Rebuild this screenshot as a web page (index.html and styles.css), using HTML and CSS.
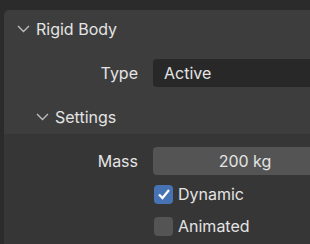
FILE: index.html
```html
<!DOCTYPE html>
<html lang="en">
    <head>
        <meta charset="UTF-8">
        <title>Rigid Body</title>
        <link rel="stylesheet" href="styles.css">
    </head>
    <body>
        <div class="panel">
            <div class="head">
                <svg class="chev" width="13" height="8" viewBox="0 0 13 8"><path d="M1 1 L6.5 6.5 L12 1" fill="none" stroke="#bdbdbd" stroke-width="1.4"/></svg>
                <span>Rigid Body</span>
            </div>
            <div class="row typerow">
                <label>Type</label>
                <div class="menu">Active</div>
            </div>
            <div class="sub">
                <div class="subhead">
                    <svg class="chev" width="13" height="8" viewBox="0 0 13 8"><path d="M1 1 L6.5 6.5 L12 1" fill="none" stroke="#bdbdbd" stroke-width="1.4"/></svg>
                    <span>Settings</span>
                </div>
                <div class="subbody">
                    <div class="row">
                        <label>Mass</label>
                        <div class="num">200 kg</div>
                    </div>
                    <div class="row check first">
                        <label></label>
                        <div class="cb on"><svg width="14" height="12" viewBox="0 0 14 12"><path d="M2 6.5 L5.5 10 L12 2" fill="none" stroke="#fff" stroke-width="2.2"/></svg></div>
                        <span>Dynamic</span>
                    </div>
                    <div class="row check">
                        <label></label>
                        <div class="cb"></div>
                        <span>Animated</span>
                    </div>
                </div>
            </div>
        </div>
    </body>
</html>
```
FILE: styles.css
```css
*{
    padding: 0;
    margin: 0;
    box-sizing: border-box;
}
body{
    background: #2b2b2b;
    font-family: Inter, "DejaVu Sans", sans-serif;
    font-size: 16px;
    color: #e4e4e4;
    width: 310px;
    height: 244px;
    overflow: hidden;
}
.panel{
    margin: 10px 0 0 4px;
    width: 306px;
    background: #3d3d3d;
    border-radius: 5px 0 0 0;
}
.head{
    height: 38px;
    display: flex;
    align-items: center;
    padding-left: 13px;
}
.head .chev{
    margin-right: 6px;
}
.row{
    display: grid;
    grid-template-columns: 134px 157px;
    column-gap: 15px;
    align-items: center;
}
.row label{
    text-align: right;
}
.typerow{
    margin-top: 11px;
}
.menu{
    height: 28px;
    line-height: 28px;
    background: #282828;
    border-radius: 4px 0 0 4px;
    padding-left: 11px;
}
.sub{
    margin-top: 13px;
}
.subhead{
    height: 34px;
    display: flex;
    align-items: center;
    padding-left: 32px;
}
.subhead .chev{
    margin-right: 6px;
}
.subbody{
    background: #363636;
    padding: 13px 0 2px;
}
.num{
    height: 28px;
    line-height: 28px;
    background: #545454;
    border-radius: 4px 0 0 4px;
    text-align: center;
    padding-left: 27px;
}
.check{
    grid-template-columns: 134px 19px auto;
    height: 32px;
}
.check.first{
    margin-top: 3px;
}
.check span{
    margin-left: -9px;
}
.cb{
    width: 19px;
    height: 19px;
    border-radius: 4px;
    background: #545454;
    margin-left: 1px;
    display: flex;
    align-items: center;
    justify-content: center;
}
.cb.on{
    background: #4772b3;
}
```
